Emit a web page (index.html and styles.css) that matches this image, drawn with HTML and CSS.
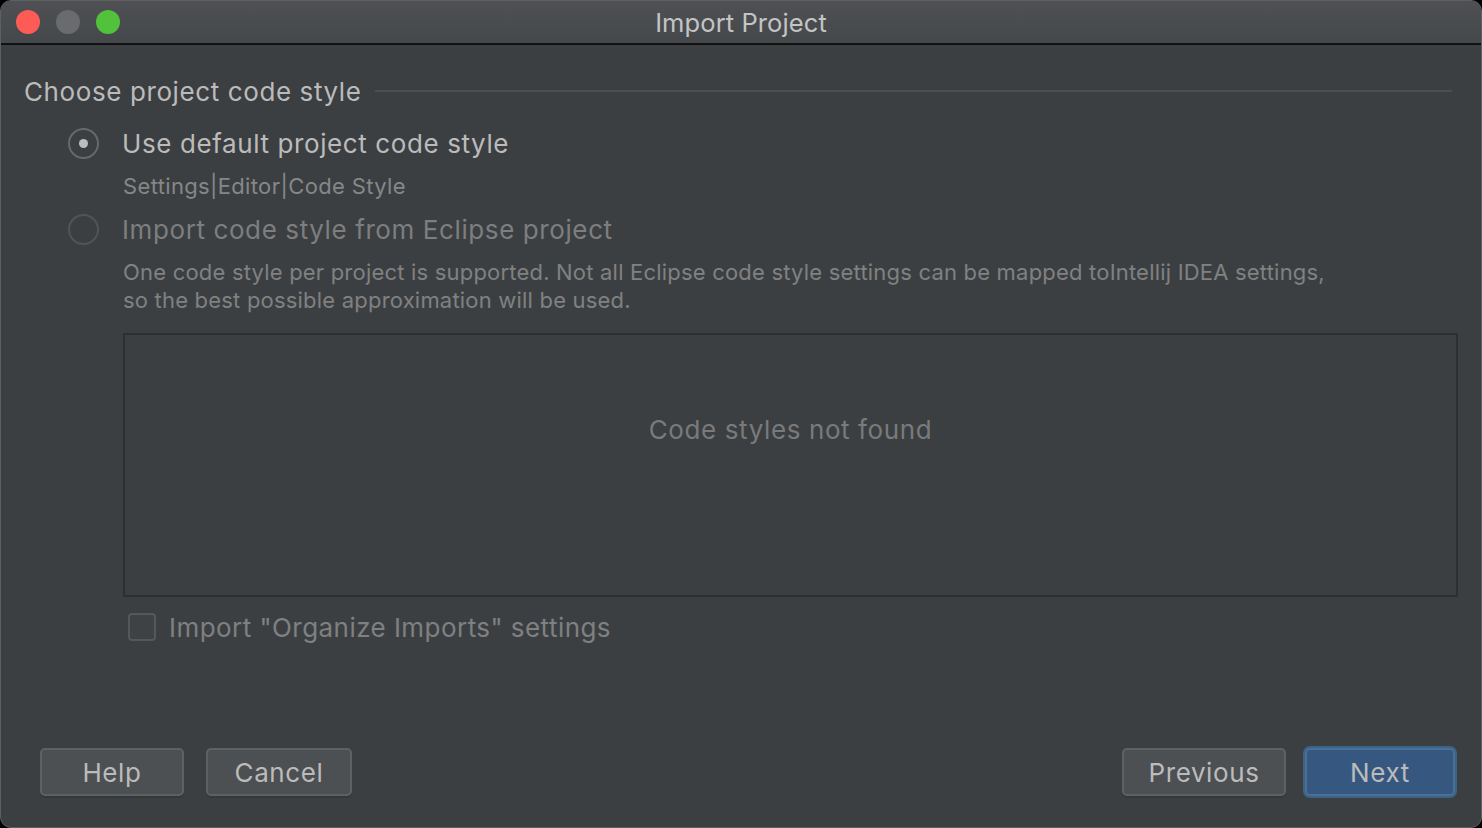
FILE: index.html
```html
<!DOCTYPE html>
<html>
<head>
<meta charset="utf-8">
<link rel="stylesheet" href="styles.css">
</head>
<body>
<div class="window">
  <div class="titlebar">
    <div class="lights">
      <span class="light red"></span>
      <span class="light grey"></span>
      <span class="light green"></span>
    </div>
    <div class="title">Import Project</div>
  </div>
  <div class="content">
    <div class="section-head">
      <span class="section-title">Choose project code style</span>
      <span class="section-line"></span>
    </div>
    <div class="radio-row">
      <span class="radio checked"><span class="dot"></span></span>
      <span class="radio-label">Use default project code style</span>
    </div>
    <div class="hint">Settings|Editor|Code Style</div>
    <div class="radio-row disabled">
      <span class="radio"></span>
      <span class="radio-label">Import code style from Eclipse project</span>
    </div>
    <div class="desc">One code style per project is supported. Not all Eclipse code style settings can be mapped toIntellij IDEA settings,<br>so the best possible approximation will be used.</div>
    <div class="list-box">
      <div class="empty-text">Code styles not found</div>
    </div>
    <div class="check-row">
      <span class="checkbox"></span>
      <span class="check-label">Import "Organize Imports" settings</span>
    </div>
  </div>
  <div class="footer">
    <div class="btn-group">
      <button class="btn help">Help</button>
      <button class="btn cancel">Cancel</button>
    </div>
    <div class="btn-group right">
      <button class="btn previous">Previous</button>
      <button class="btn primary next">Next</button>
    </div>
  </div>
</div>
</body>
</html>
```

FILE: styles.css
```css
html, body {
  margin: 0;
  padding: 0;
  background: #000;
}
body {
  width: 1482px;
  height: 828px;
  overflow: hidden;
  font-family: Inter, "Liberation Sans", sans-serif;
}
.window {
  box-sizing: border-box;
  width: 1482px;
  height: 828px;
  background: #3c3f41;
  border: 1px solid #5d5f61;
  border-radius: 11px;
  overflow: hidden;
  display: flex;
  flex-direction: column;
}
.titlebar {
  height: 42px;
  flex: none;
  background: linear-gradient(#4e5053, #45484b);
  border-bottom: 2px solid #111;
  display: flex;
  align-items: center;
  position: relative;
}
.lights {
  display: flex;
  gap: 16px;
  padding-left: 15px;
}
.light {
  width: 24px;
  height: 24px;
  border-radius: 50%;
  display: block;
}
.red { background: #fd5b55; }
.grey { background: #6a6b6e; }
.green { background: #52c13c; }
.title {
  position: absolute;
  left: 0;
  right: 0;
  top: 0;
  height: 42px;
  line-height: 44px;
  text-align: center;
  color: #c4c4c4;
  font-size: 25.5px;
  letter-spacing: 0.1px;
}
.content {
  flex: 1;
  display: flex;
  flex-direction: column;
  padding: 30px 23px 0 23px;
}
.section-head {
  display: flex;
  align-items: center;
  height: 32px;
}
.section-title {
  color: #bbbbbb;
  font-size: 26px;
  letter-spacing: 0.6px;
  white-space: nowrap;
}
.section-line {
  flex: 1;
  height: 2px;
  background: #4c4f51;
  margin-left: 13px;
  margin-right: 6px;
}
.radio-row {
  display: flex;
  align-items: center;
  height: 32px;
  margin-top: 20px;
  padding-left: 44px;
}
.radio {
  box-sizing: border-box;
  width: 31px;
  height: 31px;
  border-radius: 50%;
  border: 2px solid #666869;
  display: flex;
  align-items: center;
  justify-content: center;
}
.dot {
  width: 9px;
  height: 9px;
  border-radius: 50%;
  background: #bdbdbd;
}
.radio-label {
  margin-left: 23px;
  color: #bbbbbb;
  font-size: 26px;
  letter-spacing: 0.6px;
}
.radio-row.disabled {
  margin-top: 13px;
}
.radio-row.disabled .radio {
  border-color: #515456;
}
.radio-row.disabled .radio-label {
  color: #7d7e7f;
}
.hint {
  margin-top: 13px;
  padding-left: 99px;
  color: #868788;
  font-size: 22px;
  line-height: 28px;
  letter-spacing: 0.35px;
}
.desc {
  margin-top: 13px;
  padding-left: 99px;
  color: #808182;
  font-size: 22px;
  line-height: 28px;
  letter-spacing: 0.2px;
}
.list-box {
  box-sizing: border-box;
  margin-top: 19px;
  margin-left: 99px;
  margin-right: 0;
  height: 264px;
  border: 2px solid #2e2f30;
  display: flex;
  justify-content: center;
}
.empty-text {
  margin-top: 79px;
  color: #797a7b;
  font-size: 26px;
  line-height: 32px;
  letter-spacing: 0.6px;
  height: 32px;
}
.check-row {
  display: flex;
  align-items: center;
  height: 32px;
  margin-top: 14px;
  padding-left: 104px;
}
.checkbox {
  box-sizing: border-box;
  width: 28px;
  height: 28px;
  border: 2px solid #555859;
  border-radius: 4px;
  background: #3f4244;
}
.check-label {
  margin-left: 13px;
  color: #7f8081;
  font-size: 26px;
  letter-spacing: 0.45px;
}
.footer {
  flex: none;
  display: flex;
  justify-content: space-between;
  align-items: center;
  padding: 0 26px 31px 39px;
}
.btn-group {
  display: flex;
  align-items: center;
  gap: 22px;
}
.btn-group.right {
  gap: 19px;
}
.btn {
  box-sizing: border-box;
  height: 48px;
  background: #4c5052;
  border: 2px solid #5e6163;
  border-radius: 5px;
  color: #bbbbbb;
  font-family: Inter, "Liberation Sans", sans-serif;
  font-size: 26px;
  letter-spacing: 0.6px;
  padding: 0;
  box-shadow: 0 2px 0 #36393a;
}
.help { width: 144px; }
.cancel { width: 146px; }
.previous { width: 164px; }
.next {
  width: 150px;
  height: 48px;
  background: #365880;
  border: 2px solid #4a6f93;
  box-shadow: 0 0 0 2px #3b6288;
  border-radius: 5px;
}
```
